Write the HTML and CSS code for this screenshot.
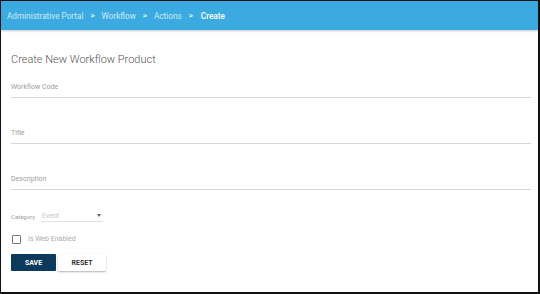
FILE: index.html
```html
<!DOCTYPE html>
<html>
<head>
<meta charset="utf-8">
<link rel="stylesheet" href="styles.css">
</head>
<body>
<div class="frame">
  <header class="topbar">
    <nav class="crumbs">
      <span class="crumb">Administrative Portal</span>
      <span class="sep">&gt;</span>
      <span class="crumb">Workflow</span>
      <span class="sep">&gt;</span>
      <span class="crumb">Actions</span>
      <span class="sep">&gt;</span>
      <span class="crumb current">Create</span>
    </nav>
  </header>
  <main class="content">
    <h1 class="title">Create New Workflow Product</h1>
    <div class="field first"><span class="label">Workflow Code</span></div>
    <div class="field"><span class="label">Title</span></div>
    <div class="field"><span class="label">Description</span></div>
    <div class="category">
      <span class="cat-label">Category</span>
      <div class="select"><span class="select-value">Event</span><span class="arrow"></span></div>
    </div>
    <label class="check"><span class="box"></span><span class="check-label">Is Web Enabled</span></label>
    <div class="buttons">
      <button class="btn save">SAVE</button>
      <button class="btn reset">RESET</button>
    </div>
  </main>
</div>
</body>
</html>
```
FILE: styles.css
```css
* { box-sizing: border-box; }
html, body { margin: 0; padding: 0; }
body { font-family: Roboto, "Liberation Sans", sans-serif; background: #fff; }
.frame {
  width: 540px; height: 294px;
  border-style: solid; border-color: #111;
  border-width: 1px 2px 2px 1px;
  overflow: hidden;
  display: flex; flex-direction: column;
}
.topbar {
  height: 29px; background: #3aaae0;
  box-shadow: 0 1px 2px rgba(0,0,0,0.22);
  display: flex; align-items: center;
  padding-left: 6px;
  flex-shrink: 0;
}
.crumbs { display: flex; align-items: center; font-size: 8.2px; color: #cfe9f7; }
.sep { margin: 0 7px; font-weight: 700; font-size: 8px; color: #e3f3fb; }
.current { color: #fff; font-weight: 500; margin-left: 1px; }
.content { padding: 23px 7px 0 10px; display: flex; flex-direction: column; }
.title { margin: 0; font-size: 11px; font-weight: 300; color: #555; line-height: 14px; }
.field {
  height: 31px; border-bottom: 1px solid #d8d8d8;
  display: flex; align-items: flex-end; padding-bottom: 5px;
  margin-top: 15px;
}
.field.first { margin-top: 0; }
.label { font-size: 7px; color: #9d9d9d; line-height: 9px; }
.category { display: flex; align-items: center; margin-top: 20px; height: 12px; }
.cat-label { font-size: 6px; color: #a0a0a0; width: 30px; }
.select {
  width: 62px; height: 12px; border-bottom: 1px solid #e2e2e2;
  display: flex; align-items: center; justify-content: space-between;
  padding: 0 2px 0 1px;
}
.select-value { font-size: 7px; color: #c8c8c8; }
.arrow { width: 0; height: 0; border-left: 2.5px solid transparent; border-right: 2.5px solid transparent; border-top: 3px solid #666; }
.check { display: flex; align-items: center; margin-top: 12px; height: 10px; }
.box { width: 9px; height: 9px; border: 1px solid #777; border-radius: 1px; margin-left: 1px; }
.check-label { font-size: 7px; color: #aaa; margin-left: 7px; }
.buttons { display: flex; gap: 2px; margin-top: 10px; }
.btn { height: 17px; border: none; font-family: inherit; font-size: 7px; font-weight: 700; padding: 0; border-radius: 1px; }
.save { width: 45px; background: #0d3a5c; color: #fff; }
.reset { width: 48px; background: #fff; color: #333; box-shadow: 0 1px 2px rgba(0,0,0,0.3); }
```
